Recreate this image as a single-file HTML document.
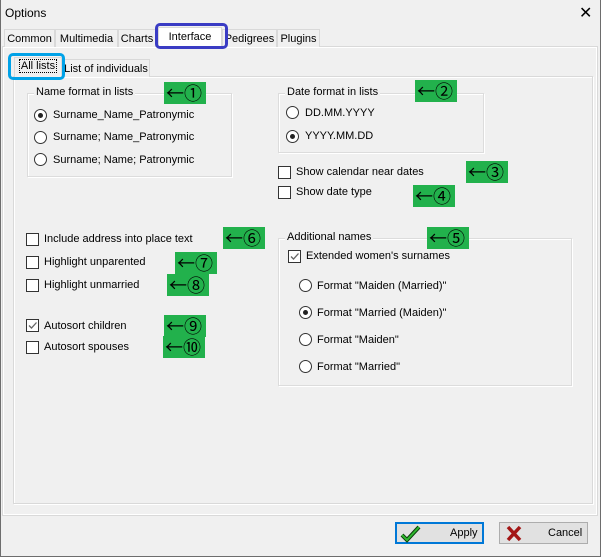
<!DOCTYPE html>
<html><head><meta charset="utf-8">
<style>
*{box-sizing:border-box;margin:0;padding:0}
body{width:601px;height:557px;background:#f0f0f0;font-family:"Liberation Sans","DejaVu Sans",sans-serif;font-size:11px;color:#000;position:relative;overflow:hidden}
.a{position:absolute;white-space:nowrap}
.frame{position:absolute;left:0;top:0;width:601px;height:557px;border-left:1px solid #6d6d6d;border-right:1px solid #6d6d6d;border-bottom:1px solid #6d6d6d}
.tab{position:absolute;top:29px;height:18px;border:1px solid #d9d9d9;border-bottom:none;background:#f0f0f0;padding:3px 0 0 0;text-align:center}
.grp{position:absolute;border:1px solid #dcdcdc;box-shadow:inset 1px 1px 0 #fff,1px 1px 0 #fff}
.gl{position:absolute;background:#f0f0f0;padding:0 2px;top:-8px;left:6px}
.rb{position:absolute;width:13px;height:13px;border:1px solid #333;border-radius:50%;background:#fff}
.rb.on::after{content:"";position:absolute;left:3px;top:3px;width:5px;height:5px;border-radius:50%;background:#222}
.cb{position:absolute;width:13px;height:13px;border:1px solid #333;background:#fff}
.g{position:absolute;background:#22b14c;height:22px;width:42px;font-size:18px;line-height:22px;padding-left:2px;font-family:"Noto Sans CJK JP","DejaVu Sans",sans-serif;letter-spacing:0;overflow:hidden}
.btn{position:absolute;top:522px;width:89px;height:22px;border:1px solid #adadad;background:#e1e1e1}
</style></head><body>
<div class="frame"></div>
<div class="a" style="left:5px;top:6px;font-size:12px">Options</div>
<div class="a" style="left:579px;top:3px;font-size:16px">✕</div>

<div class="a" style="left:2px;top:46px;width:596px;height:470px;border:1px solid #d9d9d9;box-shadow:inset 1px 1px 0 #fff,inset -1px -1px 0 #fff"></div>
<div class="tab" style="left:4px;width:51px">Common</div>
<div class="tab" style="left:55px;width:63px">Multimedia</div>
<div class="tab" style="left:118px;width:38px">Charts</div>
<div class="tab" style="left:222px;width:55px">Pedigrees</div>
<div class="tab" style="left:277px;width:43px">Plugins</div>
<div class="tab" style="left:158px;top:27px;width:64px;height:21px;background:#fff;padding-top:3px;z-index:2">Interface</div>
<div class="a" style="left:155px;top:23px;width:73px;height:26px;border:3px solid #3a3cc4;border-radius:5px;z-index:3"></div>

<div class="a" style="left:13px;top:76px;width:580px;height:428px;border:1px solid #d9d9d9;box-shadow:inset 1px 1px 0 #fff,1px 1px 0 #fff"></div>
<div class="tab" style="left:62px;top:59px;width:88px;height:18px;padding-top:3px">List of individuals</div>
<div class="tab" style="left:14px;top:57px;width:48px;height:20px;background:#f0f0f0;padding-top:2px;z-index:2"><span style="border:1px dotted #000;padding:0 1px">All lists</span></div>
<div class="a" style="left:8px;top:53px;width:57px;height:27px;border:3px solid #00a2e8;border-radius:5px;z-index:3"></div>

<div class="grp" style="left:27px;top:93px;width:205px;height:84px"><span class="gl">Name format in lists</span></div>
<div class="rb on" style="left:34px;top:109px"></div><div class="a" style="left:53px;top:109px">Surname_Name_Patronymic</div>
<div class="rb" style="left:34px;top:131px"></div><div class="a" style="left:53px;top:131px">Surname; Name_Patronymic</div>
<div class="rb" style="left:34px;top:153px"></div><div class="a" style="left:53px;top:154px">Surname; Name; Patronymic</div>

<div class="grp" style="left:278px;top:93px;width:206px;height:60px"><span class="gl">Date format in lists</span></div>
<div class="rb" style="left:286px;top:106px"></div><div class="a" style="left:305px;top:107px">DD.MM.YYYY</div>
<div class="rb on" style="left:286px;top:130px"></div><div class="a" style="left:305px;top:130px">YYYY.MM.DD</div>

<div class="cb" style="left:278px;top:166px"></div><div class="a" style="left:296px;top:166px">Show calendar near dates</div>
<div class="cb" style="left:278px;top:186px"></div><div class="a" style="left:296px;top:186px">Show date type</div>

<div class="cb" style="left:26px;top:233px"></div><div class="a" style="left:44px;top:233px">Include address into place text</div>
<div class="cb" style="left:26px;top:256px"></div><div class="a" style="left:44px;top:256px">Highlight unparented</div>
<div class="cb" style="left:26px;top:279px"></div><div class="a" style="left:44px;top:279px">Highlight unmarried</div>
<div class="cb" style="left:26px;top:319px"><svg width="11" height="11" style="position:absolute;left:0;top:0"><path d="M2 5.5 L4.5 8 L9.5 2.5" stroke="#666" stroke-width="1.3" fill="none"/></svg></div><div class="a" style="left:44px;top:320px">Autosort children</div>
<div class="cb" style="left:26px;top:341px"></div><div class="a" style="left:44px;top:341px">Autosort spouses</div>

<div class="grp" style="left:278px;top:238px;width:294px;height:148px"><span class="gl">Additional names</span></div>
<div class="cb" style="left:288px;top:250px"><svg width="11" height="11" style="position:absolute;left:0;top:0"><path d="M2 5.5 L4.5 8 L9.5 2.5" stroke="#666" stroke-width="1.3" fill="none"/></svg></div><div class="a" style="left:306px;top:250px">Extended women's surnames</div>
<div class="rb" style="left:299px;top:279px"></div><div class="a" style="left:317px;top:280px">Format "Maiden (Married)"</div>
<div class="rb on" style="left:299px;top:306px"></div><div class="a" style="left:317px;top:307px">Format "Married (Maiden)"</div>
<div class="rb" style="left:299px;top:333px"></div><div class="a" style="left:317px;top:334px">Format "Maiden"</div>
<div class="rb" style="left:299px;top:360px"></div><div class="a" style="left:317px;top:361px">Format "Married"</div>

<div class="g" style="left:164px;top:82px">←①</div>
<div class="g" style="left:415px;top:80px">←②</div>
<div class="g" style="left:466px;top:161px">←③</div>
<div class="g" style="left:413px;top:185px">←④</div>
<div class="g" style="left:427px;top:227px">←⑤</div>
<div class="g" style="left:223px;top:227px">←⑥</div>
<div class="g" style="left:175px;top:252px">←⑦</div>
<div class="g" style="left:167px;top:274px">←⑧</div>
<div class="g" style="left:164px;top:315px">←⑨</div>
<div class="g" style="left:163px;top:336px">←⑩</div>

<div class="btn" style="left:395px;border:2px solid #0078d7">
<svg width="22" height="18" style="position:absolute;left:3px;top:1px"><path d="M2 10 L7 15 L19 2" stroke="#0a3d0a" stroke-width="4" fill="none"/><path d="M2 10 L7 15 L19 2" stroke="#2fb82f" stroke-width="2" fill="none"/></svg>
<span class="a" style="left:53px;top:3px">Apply</span></div>
<div class="btn" style="left:499px">
<svg width="18" height="18" style="position:absolute;left:5px;top:2px"><path d="M3 2 L15 15 M15 2 L3 15" stroke="#a31515" stroke-width="3.5"/></svg>
<span class="a" style="left:48px;top:4px">Cancel</span></div>
</body></html>
